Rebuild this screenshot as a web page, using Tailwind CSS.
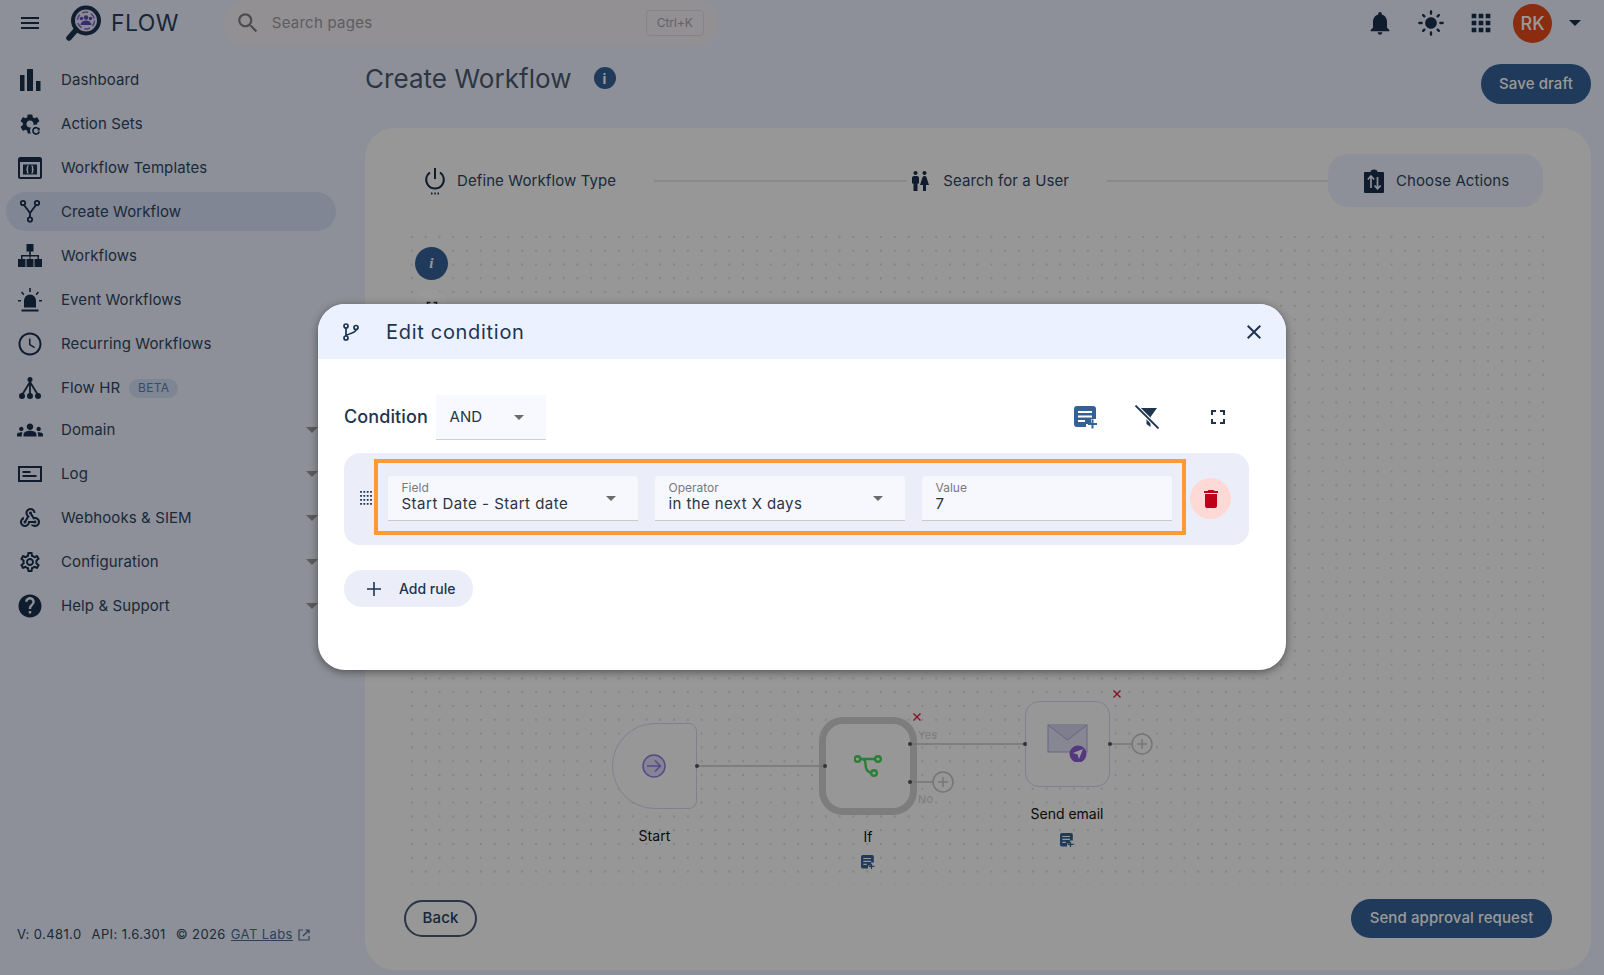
<!DOCTYPE html>
<html lang="en">
<head>
    <meta charset="UTF-8">
    <title>FLOW - Create Workflow</title>
    <script src="https://cdn.jsdelivr.net/npm/@tailwindcss/browser@4"></script>
</head>
<body class="m-0 overflow-hidden">
<div class="relative w-[1604px] h-[975px] overflow-hidden bg-[#ebf1fe] font-['Inter',sans-serif] text-[15px] tracking-[0.1px] text-[#2f4560]">

    <!-- top bar -->
    <header class="flex items-center h-[46px] pl-[18px]">
        <svg class="w-6 h-6 fill-[#182f4d]" viewBox="0 0 24 24"><path d="M3 18h18v-2H3v2zm0-5h18v-2H3v2zm0-7v2h18V6H3z"/></svg>
        <svg class="ml-[23px] w-[37px] h-[37px] mt-[1px]" viewBox="0 0 37 37">
            <circle cx="21" cy="15.5" r="13" fill="#e9e6f8" stroke="#1c3350" stroke-width="4"/>
            <path d="M11 25 L4 33" stroke="#1c3350" stroke-width="5.5" stroke-linecap="round"/>
            <circle cx="21" cy="15.5" r="8.5" fill="none" stroke="#7d6fd0" stroke-width="1.6" stroke-dasharray="6 3"/>
            <circle cx="21" cy="12.5" r="2.3" fill="#5d4bb8"/><circle cx="16.5" cy="13.5" r="1.7" fill="#5d4bb8"/><circle cx="25.5" cy="13.5" r="1.7" fill="#5d4bb8"/>
            <path d="M15.5 20a5.5 4.5 0 0 1 11 0z" fill="#5d4bb8"/>
        </svg>
        <span class="ml-[9px] text-[23px] tracking-[0.4px] text-[#2a405c]">FLOW</span>
        <div class="ml-[45px] flex items-center w-[494px] h-[46px] rounded-[23px] bg-[#f3f0f5] pl-[11px] pr-[14px]">
            <svg class="w-[26px] h-[26px] fill-[#7f7f82]" viewBox="0 0 24 24"><path d="M15.5 14h-.79l-.28-.27C15.41 12.59 16 11.11 16 9.5 16 5.91 13.09 3 9.5 3S3 5.91 3 9.5 5.91 16 9.5 16c1.61 0 3.09-.59 4.23-1.57l.27.28v.79l5 4.99L20.49 19l-4.99-5zm-6 0C7.01 14 5 11.99 5 9.5S7.01 5 9.5 5 14 7.01 14 9.5 11.99 14 9.5 14z"/></svg>
            <span class="ml-[11px] text-[#9c9ca1] tracking-[0.25px]">Search pages</span>
            <span class="ml-auto w-[58px] h-[26px] flex items-center justify-center border border-[#dedce2] rounded-[4px] text-[12px] tracking-normal text-[#a3a3a7]">Ctrl+K</span>
        </div>
        <div class="ml-auto flex items-center pr-[23px]">
            <svg class="w-[28px] h-[28px] fill-[#182f4d]" viewBox="0 0 24 24"><path d="M12 22c1.1 0 2-.9 2-2h-4c0 1.1.9 2 2 2zm6-6v-5c0-3.07-1.63-5.64-4.5-6.32V4c0-.83-.67-1.5-1.5-1.5s-1.5.67-1.5 1.5v.68C7.64 5.36 6 7.92 6 11v5l-2 2v1h16v-1l-2-2z"/></svg>
            <svg class="ml-[23px] w-[28px] h-[28px] fill-[#182f4d]" viewBox="0 0 24 24"><path d="M12 7c-2.76 0-5 2.24-5 5s2.24 5 5 5 5-2.24 5-5-2.24-5-5-5zM2 13h2c.55 0 1-.45 1-1s-.45-1-1-1H2c-.55 0-1 .45-1 1s.45 1 1 1zm18 0h2c.55 0 1-.45 1-1s-.45-1-1-1h-2c-.55 0-1 .45-1 1s.45 1 1 1zM11 2v2c0 .55.45 1 1 1s1-.45 1-1V2c0-.55-.45-1-1-1s-1 .45-1 1zm0 18v2c0 .55.45 1 1 1s1-.45 1-1v-2c0-.55-.45-1-1-1s-1 .45-1 1zM5.99 4.58c-.39-.39-1.03-.39-1.41 0-.39.39-.39 1.03 0 1.41l1.06 1.06c.39.39 1.03.39 1.41 0s.39-1.03 0-1.41L5.99 4.58zm12.37 12.37c-.39-.39-1.03-.39-1.41 0-.39.39-.39 1.03 0 1.41l1.06 1.06c.39.39 1.03.39 1.41 0 .39-.39.39-1.03 0-1.41l-1.06-1.06zm1.06-10.96c.39-.39.39-1.03 0-1.41-.39-.39-1.03-.39-1.41 0l-1.06 1.06c-.39.39-.39 1.03 0 1.41s1.03.39 1.41 0l1.06-1.06zM7.05 18.36c.39-.39.39-1.03 0-1.41-.39-.39-1.03-.39-1.41 0l-1.06 1.06c-.39.39-.39 1.03 0 1.41s1.03.39 1.41 0l1.06-1.06z"/></svg>
            <svg class="ml-[22px] w-[28px] h-[28px] fill-[#182f4d]" viewBox="0 0 24 24"><path d="M4 8h4V4H4v4zm6 12h4v-4h-4v4zm-6 0h4v-4H4v4zm0-6h4v-4H4v4zm6 0h4v-4h-4v4zm6-10v4h4V4h-4zm-6 4h4V4h-4v4zm6 6h4v-4h-4v4zm0 6h4v-4h-4v4z"/></svg>
            <div class="ml-[18px] w-[39px] h-[39px] rounded-full bg-[#e64a19] flex items-center justify-center text-white text-[18px] font-medium tracking-normal">RK</div>
            <span class="ml-[17px] w-0 h-0 border-x-[6px] border-x-transparent border-t-[6px] border-t-[#182f4d]"></span>
        </div>
    </header>

    <div class="flex h-[929px]">
        <!-- sidebar -->
        <aside class="relative w-[365px] shrink-0 pt-[12px]">
            <nav>
                <a class="flex items-center h-[44px] pl-[18px] gap-[19px]">
                    <svg class="w-6 h-6 -mt-[1px] fill-[#182f4d]" viewBox="0 0 24 24"><path d="M2 7h4.500v16H2zM9 1h6v22H9zM18 13h4.500v10H18z"/></svg>Dashboard</a>
                <a class="flex items-center h-[44px] pl-[18px] gap-[19px]">
                    <svg class="w-6 h-6 -mt-[1px]" viewBox="0 0 24 24"><path fill="#182f4d" d="M19.14 12.94c.04-.3.06-.61.06-.94 0-.32-.02-.64-.07-.94l2.03-1.58c.18-.14.23-.41.12-.61l-1.92-3.32c-.12-.22-.37-.29-.59-.22l-2.39.96c-.5-.38-1.03-.7-1.62-.94l-.36-2.54c-.04-.24-.24-.41-.48-.41h-3.84c-.24 0-.43.17-.47.41l-.36 2.54c-.59.24-1.13.57-1.62.94l-2.39-.96c-.22-.08-.47 0-.59.22L2.74 8.87c-.12.21-.08.47.12.61l2.03 1.58c-.05.3-.07.62-.07.94s.02.64.07.94l-2.03 1.58c-.18.14-.23.41-.12.61l1.92 3.32c.12.22.37.29.59.22l2.39-.96c.5.38 1.03.7 1.62.94l.36 2.54c.05.24.24.41.48.41h3.84c.24 0 .44-.17.47-.41l.36-2.54c.59-.24 1.13-.56 1.62-.94l2.39.96c.22.08.47 0 .59-.22l1.92-3.32c.12-.22.07-.47-.12-.61l-2.01-1.58zM12 15.6c-1.98 0-3.6-1.62-3.6-3.6s1.62-3.6 3.6-3.6 3.6 1.62 3.6 3.6-1.62 3.6-3.6 3.6z"/><circle cx="18" cy="18.5" r="6" fill="#ebf1fe"/><path d="M21 17.5a3.2 3.2 0 1 0 .2 2" fill="none" stroke="#182f4d" stroke-width="1.6"/><path d="M21.7 15.6v2.8h-2.8z" fill="#182f4d"/></svg>Action Sets</a>
                <a class="flex items-center h-[44px] pl-[18px] gap-[19px]">
                    <svg class="w-6 h-6 -mt-[1px]" viewBox="0 0 24 24"><rect y="1" width="24" height="22" rx="2.500" fill="#182f4d"/><rect x="2" y="6" width="20" height="15" fill="#ebf1fe"/><rect x="5" y="8.500" width="14" height="10" fill="#182f4d"/><path d="M10.500 10c-1.500 0-1 2-1 3-.2.4-.8.500-1.200.500.4 0 1 .1 1.200.5 0 1-.5 3 1 3M13.500 10c1.500 0 1 2 1 3 .2.4.8.500 1.200.500-.4 0-1 .1-1.200.5 0 1 .5 3-1 3" fill="none" stroke="#ebf1fe" stroke-width="1.400"/></svg>Workflow Templates</a>
                <a class="flex items-center h-[39px] mt-[2px] mb-[3px] ml-[6px] w-[330px] pl-[12px] gap-[19px] rounded-[20px] bg-[#d5dff7]">
                    <svg class="w-6 h-6 -mt-[1px]" viewBox="0 0 24 24" fill="none" stroke="#182f4d" stroke-width="1.8"><circle cx="5" cy="4" r="2.2"/><circle cx="19" cy="4" r="2.2"/><circle cx="12" cy="20.5" r="2.2"/><path d="M6 6l6 8 6-8M12 14v4.3"/></svg><span class="mt-[1px]">Create Workflow</span></a>
                <a class="flex items-center h-[44px] pl-[18px] gap-[19px]">
                    <svg class="w-6 h-6 -mt-[1px] fill-[#182f4d]" viewBox="0 0 24 24"><path d="M8.500 0h7v7.500h-2.700V11H21v4h3v8h-7.500v-8h3v-2.500h-7V15h3v8h-7v-8h3v-2.500h-7V15h3v8H0v-8h3v-4h8.200V7.500H8.500z"/></svg>Workflows</a>
                <a class="flex items-center h-[44px] pl-[18px] gap-[19px]">
                    <svg class="w-6 h-6 -mt-[1px] fill-[#182f4d]" viewBox="0 0 24 24"><path d="M6 19.500v-7a6 6 0 0 1 12 0v7zM3.500 21.500h17v2h-17zM11.200 0h1.600v4h-1.600zM0 12h3v1.600H0zM21 12h3v1.600h-3zM3 4.500l1.200-1 2.200 2.800-1.200 1zM21 4.500l-1.200-1-2.200 2.800 1.200 1z"/></svg>Event Workflows</a>
                <a class="flex items-center h-[44px] pl-[18px] gap-[19px]">
                    <svg class="w-6 h-6 -mt-[1px] fill-[#182f4d]" viewBox="0 0 24 24"><path d="M11.990 0.500C5.640 0.500 0.500 5.650 0.500 12s5.140 11.500 11.490 11.500C18.350 23.500 23.500 18.350 23.500 12S18.350 0.500 11.990 0.500zM12 21.500c-5.250 0-9.500-4.250-9.500-9.500S6.750 2.500 12 2.500s9.500 4.250 9.500 9.500-4.250 9.500-9.500 9.500zM12.500 6.500H11v6.500l5.250 3.150.75-1.230-4.500-2.670z"/></svg>Recurring Workflows</a>
                <a class="flex items-center h-[44px] pl-[18px] gap-[19px]">
                    <svg class="w-6 h-6 -mt-[1px]" viewBox="0 0 24 24"><path d="M12 4v15M12 6L4 19M12 6l8 13" fill="none" stroke="#182f4d" stroke-width="1.8"/><g fill="#182f4d"><circle cx="12" cy="3.500" r="2.500"/><circle cx="4" cy="20" r="3"/><circle cx="12" cy="20" r="3"/><circle cx="20" cy="20" r="3"/></g></svg>
                    <span>Flow HR</span>
                    <span class="-ml-[10px] w-[49px] h-[19px] rounded-[10px] bg-[#d3def5] flex items-center justify-center text-[12px] tracking-[0.4px] text-[#617ab4]">BETA</span></a>
                <a class="relative flex items-center h-[44px] -mt-[2px] pl-[18px] gap-[19px]">
                    <svg class="w-[26px] h-[26px] -ml-[1px] -mr-[1px] -mt-[1px] fill-[#182f4d]" viewBox="0 0 24 24"><path d="M4 13c1.100 0 2-.9 2-2s-.9-2-2-2-2 .9-2 2 .9 2 2 2zm1.130 1.100c-.37-.06-.74-.1-1.130-.1-.99 0-1.930.21-2.780.58C.48 14.900 0 15.620 0 16.430V18h4.500v-1.610c0-.83.23-1.610.63-2.290zM20 13c1.100 0 2-.9 2-2s-.9-2-2-2-2 .9-2 2 .9 2 2 2zm4 3.430c0-.81-.48-1.530-1.220-1.850-.85-.37-1.790-.58-2.780-.58-.39 0-.76.04-1.130.1.4.68.63 1.460.63 2.290V18H24v-1.570zm-7.760-2.780c-1.170-.52-2.610-.9-4.240-.9-1.630 0-3.070.39-4.240.9C6.680 14.130 6 15.210 6 16.390V18h12v-1.610c0-1.180-.68-2.260-1.760-2.740zM12 12c1.660 0 3-1.340 3-3s-1.340-3-3-3-3 1.340-3 3 1.340 3 3 3z"/></svg>Domain
                    <span class="absolute left-[306px] top-[19px] w-0 h-0 border-x-[6px] border-x-transparent border-t-[6px] border-t-[#9a9a9d]"></span></a>
                <a class="relative flex items-center h-[44px] pl-[18px] gap-[19px]">
                    <svg class="w-6 h-6 -mt-[1px]" viewBox="0 0 24 24" fill="none" stroke="#182f4d"><rect x="1" y="5" width="22" height="14" stroke-width="2"/><path d="M4.500 10h8M4.500 14h14" stroke-width="1.800"/></svg>Log
                    <span class="absolute left-[306px] top-[19px] w-0 h-0 border-x-[6px] border-x-transparent border-t-[6px] border-t-[#9a9a9d]"></span></a>
                <a class="relative flex items-center h-[44px] pl-[18px] gap-[19px]">
                    <svg class="w-6 h-6 -mt-[1px] fill-[#182f4d]" viewBox="0 0 24 24"><path d="M10 15h5.880c.27-.31.67-.5 1.120-.5.83 0 1.500.67 1.500 1.500s-.67 1.500-1.500 1.500c-.44 0-.84-.19-1.120-.5H11.900c-.46 2.280-2.480 4-4.900 4-2.760 0-5-2.240-5-5 0-2.420 1.720-4.440 4-4.900v2.070c-1.160.41-2 1.530-2 2.830 0 1.650 1.350 3 3 3s3-1.350 3-3v-1zm2.500-11c1.650 0 3 1.350 3 3h2c0-2.760-2.240-5-5-5s-5 2.240-5 5c0 1.430.6 2.710 1.550 3.620l-2.350 3.900c-.68.14-1.200.75-1.200 1.480 0 .83.67 1.500 1.500 1.500s1.500-.67 1.500-1.500c0-.16-.02-.31-.07-.45l3.380-5.630C10.490 9.610 9.500 8.420 9.500 7c0-1.650 1.350-3 3-3zm4.500 9c-.64 0-1.230.2-1.720.54l-3.050-5.070C11.530 8.350 11 7.740 11 7c0-.83.67-1.500 1.500-1.500S14 6.170 14 7c0 .15-.02.29-.06.43l2.190 3.650c.28-.05.57-.08.87-.08 2.760 0 5 2.240 5 5s-2.240 5-5 5c-1.850 0-3.470-1.010-4.330-2.500h2.670c.48.32 1.050.5 1.660.5 1.650 0 3-1.350 3-3s-1.350-3-3-3z"/></svg>Webhooks &amp; SIEM
                    <span class="absolute left-[306px] top-[19px] w-0 h-0 border-x-[6px] border-x-transparent border-t-[6px] border-t-[#9a9a9d]"></span></a>
                <a class="relative flex items-center h-[44px] pl-[18px] gap-[19px]">
                    <svg class="w-6 h-6 -mt-[1px] fill-[#182f4d]" viewBox="0 0 24 24"><path d="M19.430 12.980c.04-.32.07-.64.07-.98 0-.34-.03-.66-.07-.98l2.110-1.650c.19-.15.24-.42.12-.64l-2-3.460c-.09-.16-.26-.25-.44-.25-.06 0-.12.01-.17.03l-2.490 1c-.52-.4-1.080-.73-1.690-.98l-.38-2.650C14.460 2.180 14.250 2 14 2h-4c-.25 0-.46.18-.49.42l-.38 2.650c-.61.25-1.170.59-1.690.98l-2.490-1c-.06-.02-.12-.03-.18-.03-.17 0-.34.09-.43.25l-2 3.460c-.13.22-.07.49.12.64l2.110 1.650c-.04.32-.07.65-.07.98 0 .33.03.66.07.98l-2.110 1.650c-.19.15-.24.42-.12.64l2 3.460c.09.16.26.25.44.25.06 0 .12-.01.17-.03l2.490-1c.52.4 1.080.73 1.690.98l.38 2.650c.03.24.24.42.49.42h4c.25 0 .46-.18.49-.42l.38-2.650c.61-.25 1.170-.59 1.690-.98l2.490 1c.06.02.12.03.18.03.17 0 .34-.09.43-.25l2-3.460c.12-.22.07-.49-.12-.64l-2.110-1.650zm-1.980-1.710c.04.31.05.52.05.73 0 .21-.02.43-.05.73l-.14 1.130.89.7 1.080.84-.7 1.210-1.270-.51-1.040-.42-.9.68c-.43.32-.84.56-1.250.73l-1.060.43-.16 1.130-.2 1.350h-1.400l-.19-1.350-.16-1.130-1.060-.43c-.43-.18-.83-.41-1.230-.71l-.91-.7-1.060.43-1.270.51-.7-1.210 1.080-.84.89-.7-.14-1.130c-.03-.31-.05-.54-.05-.74s.02-.43.05-.73l.14-1.130-.89-.7-1.080-.84.7-1.210 1.270.51 1.040.42.9-.68c.43-.32.84-.56 1.250-.73l1.060-.43.16-1.130.2-1.350h1.390l.19 1.350.16 1.130 1.060.43c.43.18.83.41 1.230.71l.91.7 1.060-.43 1.270-.51.7 1.210-1.070.85-.89.7.14 1.130zM12 8c-2.210 0-4 1.790-4 4s1.790 4 4 4 4-1.790 4-4-1.790-4-4-4zm0 6c-1.100 0-2-.9-2-2s.9-2 2-2 2 .9 2 2-.9 2-2 2z"/></svg>Configuration
                    <span class="absolute left-[306px] top-[19px] w-0 h-0 border-x-[6px] border-x-transparent border-t-[6px] border-t-[#9a9a9d]"></span></a>
                <a class="relative flex items-center h-[44px] pl-[18px] gap-[19px]">
                    <svg class="w-6 h-6 -mt-[1px] fill-[#182f4d]" viewBox="0 0 24 24"><path d="M12 .5C5.650.5.5 5.650.5 12S5.650 23.500 12 23.500 23.500 18.350 23.500 12 18.350.5 12 .5zm1.200 19h-2.400v-2.400h2.400v2.400zm2.480-8.900l-1.080 1.100C13.740 12.580 13.200 13.300 13.200 15h-2.400v-.6c0-1.320.54-2.520 1.400-3.400l1.490-1.510c.44-.43.71-1.030.71-1.690 0-1.320-1.080-2.400-2.400-2.400s-2.400 1.080-2.400 2.400H7.200C7.200 5.150 9.350 3 12 3s4.800 2.150 4.800 4.800c0 1.060-.43 2.020-1.120 2.800z"/></svg>Help &amp; Support
                    <span class="absolute left-[306px] top-[19px] w-0 h-0 border-x-[6px] border-x-transparent border-t-[6px] border-t-[#9a9a9d]"></span></a>
            </nav>
            <div class="absolute left-[17px] top-[879px] flex items-center text-[13px] tracking-[0.4px] whitespace-nowrap">
                <span>V: 0.481.0</span><span class="ml-[10px]">API: 1.6.301</span><span class="ml-[10px]">© 2026</span>
                <span class="ml-[5px] underline text-[#4d6b94]">GAT Labs</span>
                <svg class="ml-[5px] w-[12px] h-[12px]" viewBox="0 0 12 12" fill="none" stroke="#4d6b94" stroke-width="1.200"><path d="M5 1H1v10h10V7M5 7l6-6M7.500 1H11v3.500"/></svg>
            </div>
        </aside>

        <!-- main column -->
        <main class="flex-1 flex flex-col pr-[13px] pb-[5px]">
            <div class="flex items-start h-[82px] shrink-0">
                <h1 class="mt-[15px] text-[26px] leading-[36px] font-normal tracking-[0.05px] text-[#4b5a6e]">Create Workflow</h1>
                <span class="ml-[22px] mt-[21px] w-[22px] h-[22px] rounded-full bg-[#346196] flex items-center justify-center text-white text-[14px] font-bold tracking-normal">i</span>
                <button class="ml-auto mt-[18px] h-[40px] w-[110px] rounded-[20px] bg-[#346196] text-white font-medium">Save draft</button>
            </div>

            <section class="flex-1 flex flex-col rounded-[30px] bg-[#fcfcfc] pt-[26px]">
                <!-- stepper -->
                <div class="flex items-center h-[53px] pl-[58px]">
                    <svg class="w-6 h-[30px] shrink-0" viewBox="0 0 24 30" fill="none" stroke="#182f4d" stroke-width="2"><path d="M7 6.500a8.800 8.800 0 1 0 10 0M12 2v11"/><path d="M8 27.500h1.500M11.300 27.500h1.500M14.500 27.500h1.500" stroke-width="1.800"/></svg>
                    <span class="ml-[10px] mt-[1px] whitespace-nowrap">Define Workflow Type</span>
                    <span class="ml-[38px] w-[253px] h-[2px] bg-[#e6e6e6]"></span>
                    <svg class="ml-[1px] w-6 h-6 shrink-0 fill-[#182f4d]" viewBox="0 0 24 24"><path d="M5.500 22v-7.500H4V9c0-1.100.9-2 2-2h3c1.100 0 2 .9 2 2v5.500H9.500V22h-4zM18 22v-6h3l-2.540-7.630C18.180 7.550 17.420 7 16.560 7h-.12c-.86 0-1.630.55-1.900 1.370L12 16h3v6h3zM7.500 6c1.110 0 2-.89 2-2s-.89-2-2-2-2 .89-2 2 .89 2 2 2zm9 0c1.110 0 2-.89 2-2s-.89-2-2-2-2 .89-2 2 .89 2 2 2z"/></svg>
                    <span class="ml-[11px] mt-[1px] whitespace-nowrap">Search for a User</span>
                    <span class="ml-[38px] w-[221px] h-[2px] bg-[#e6e6e6]"></span>
                    <div class="flex items-center w-[215px] h-[53px] pl-[34px] rounded-[20px] bg-[#ebf1fe]">
                        <svg class="w-6 h-6 shrink-0" viewBox="0 0 24 24"><path fill="#182f4d" d="M3 3h5.500a3.500 2.500 0 0 1 7 0H21a1 1 0 0 1 1 1v19a1 1 0 0 1-1 1H3a1 1 0 0 1-1-1V4a1 1 0 0 1 1-1z"/><path d="M9 19V7.500M5.800 10.500L9 7l3.200 3.500M15.500 8v11.500M12.500 16.500l3 3.300 3.200-3.300" fill="none" stroke="#ebf1fe" stroke-width="1.700"/></svg>
                        <span class="ml-[10px] mt-[1px] whitespace-nowrap">Choose Actions</span>
                    </div>
                </div>

                <!-- canvas -->
                <div class="relative mt-[23px] ml-[40px] w-[1147px] h-[655px] bg-[radial-gradient(circle,#dcdde0_0.8px,transparent_1px)] bg-[size:13.8px_13.8px]">
                    <button class="absolute left-[10px] top-[17px] w-[33px] h-[33px] rounded-full bg-[#346196] flex items-center justify-center font-['Liberation_Serif',serif] italic font-bold text-white text-[15px]">i</button>
                    <button class="absolute left-[10px] top-[60px] w-[33px] h-[33px] rounded-full bg-white flex items-center justify-center">
                        <svg class="w-[18px] h-[18px] fill-[#182f4d]" viewBox="0 0 24 24"><path d="M7 14H5v5h5v-2H7v-3zm-2-4h2V7h3V5H5v5zm12 7h-3v2h5v-5h-2v3zM14 5v2h3v3h2V5h-5z"/></svg>
                    </button>

                    <!-- Start -->
                    <div class="absolute left-[207px] top-[493px] w-[85px] h-[86px] rounded-l-[43px] rounded-r-[8px] border border-[#d4d8ee] bg-[#fcfcfc] flex items-center justify-center">
                        <svg class="w-6 h-6 -mt-[1px] -ml-[1px]" viewBox="0 0 24 24" fill="none" stroke="#8a7ce0" stroke-width="1.500"><circle cx="12" cy="12" r="11" fill="#dedaf8"/><path d="M5 12h13M13 6.500l5.500 5.500-5.500 5.500"/></svg>
                    </div>
                    <div class="absolute left-[207px] top-[595px] w-[85px] text-center text-[14px] text-[#111]">Start</div>

                    <!-- If -->
                    <div class="absolute left-[414px] top-[487px] w-[98px] h-[98px] rounded-[24px] border-[7px] border-[#d0d0d0] bg-[#fcfcfc] flex items-center justify-center">
                        <svg class="w-[28px] h-[22px]" viewBox="0 0 28 22" fill="none" stroke="#46d45c" stroke-width="2.400"><circle cx="3.500" cy="4" r="2.800"/><circle cx="24" cy="4" r="2.800"/><circle cx="20" cy="18" r="2.800"/><path d="M6.500 4h14.500M8 4c3 0 3.500 2 3.500 5s1 8 6 9"/></svg>
                    </div>
                    <div class="absolute left-[414px] top-[596px] w-[98px] text-center text-[14px] text-[#111]">If</div>
                    <svg class="absolute left-[456px] top-[625px] w-[14px] h-[14px]" viewBox="0 0 24 24"><path fill="#346196" d="M3 0h16a3 3 0 0 1 3 3v10h-5v5h-5v5H3a3 3 0 0 1-3-3V3a3 3 0 0 1 3-3z"/><path d="M4 6h13M4 11h13M4 16h6" fill="none" stroke="#fcfcfc" stroke-width="2"/><path d="M18 15v9M13.500 19.500h9.500" fill="none" stroke="#346196" stroke-width="2"/></svg>

                    <!-- Send email -->
                    <div class="absolute left-[620px] top-[471px] w-[85px] h-[86px] rounded-[14px] border border-[#d4d8ee] bg-[#fcfcfc]">
                        <svg class="absolute left-[21px] top-[22px] w-[42px] h-[38px]" viewBox="0 0 42 38"><rect x="1" y="1" width="39" height="27" fill="#e2e2f6" stroke="#a9a9d8"/><path d="M1 1l19.500 15L40 1" fill="#d2d2ee" stroke="#a9a9d8"/><circle cx="31" cy="30" r="8.500" fill="#8a5ed6"/><path d="M26 29l10-4-4 10-1.500-4.500z" fill="#fff"/></svg>
                    </div>
                    <div class="absolute left-[602px] top-[573px] w-[120px] text-center text-[14px] text-[#111] tracking-normal">Send email</div>
                    <svg class="absolute left-[655px] top-[603px] w-[14px] h-[14px]" viewBox="0 0 24 24"><path fill="#346196" d="M3 0h16a3 3 0 0 1 3 3v10h-5v5h-5v5H3a3 3 0 0 1-3-3V3a3 3 0 0 1 3-3z"/><path d="M4 6h13M4 11h13M4 16h6" fill="none" stroke="#fcfcfc" stroke-width="2"/><path d="M18 15v9M13.500 19.500h9.500" fill="none" stroke="#346196" stroke-width="2"/></svg>

                    <!-- connectors, coordinates are page pixels -->
                    <svg class="absolute inset-0 w-full h-full" viewBox="405 230 1147 655" fill="none">
                        <g stroke="#c4c4c4" stroke-width="1.500">
                            <path d="M697 766H825M910 744H1025M910 782H933M1110 744H1132"/>
                            <circle cx="943" cy="782" r="10" fill="#fcfcfc"/>
                            <circle cx="1142" cy="744" r="10" fill="#fcfcfc"/>
                            <path d="M943 777v10M938 782h10M1142 739v10M1137 744h10"/>
                        </g>
                        <g fill="#555">
                            <circle cx="697" cy="766" r="2"/><circle cx="825" cy="766" r="2"/>
                            <circle cx="910" cy="744" r="2"/><circle cx="910" cy="782" r="2"/>
                            <circle cx="1025" cy="744" r="2"/><circle cx="1110" cy="744" r="2"/>
                        </g>
                        <path d="M913.500 713.500l7 7m0-7l-7 7M1113.500 690.500l7 7m0-7l-7 7" stroke="#e61a35" stroke-width="1.400"/>
                        <text x="918" y="739" font-size="11" fill="#d0d0d0">Yes</text>
                        <text x="918" y="803" font-size="11" fill="#d0d0d0">No</text>
                    </svg>
                </div>

                <div class="flex items-center justify-between h-[39px] mt-[14px] pl-[39px] pr-[39px]">
                    <button class="w-[73px] h-[37px] rounded-[19px] border-2 border-[#465a75] font-medium text-[#2a405c]">Back</button>
                    <button class="w-[201px] h-[39px] rounded-[20px] bg-[#346196] text-white font-medium">Send approval request</button>
                </div>
            </section>
        </main>
    </div>

    <!-- backdrop -->
    <div class="absolute inset-0 bg-black/40"></div>

    <!-- dialog -->
    <div class="absolute left-[318px] top-[304px] w-[968px] h-[366px] rounded-[27px] bg-white overflow-hidden shadow-[0_2px_8px_rgba(0,0,0,0.45)] text-[#1e3550]">
        <div class="flex items-center h-[55px] pl-[24px] pr-[20px] bg-[#ebf1fe]">
            <svg class="w-[18px] h-[18px]" viewBox="0 0 18 18" fill="none" stroke="#1e3550" stroke-width="1.700"><circle cx="4" cy="3" r="2"/><circle cx="4" cy="15" r="2"/><circle cx="14" cy="4.500" r="2"/><path d="M4 5v8M14 6.500c0 3.500-4.500 3-10 6"/></svg>
            <h2 class="ml-[26px] text-[20px] font-normal tracking-[0.7px]">Edit condition</h2>
            <svg class="ml-auto w-6 h-6 fill-[#1e3550]" viewBox="0 0 24 24"><path d="M19 6.410L17.590 5 12 10.590 6.410 5 5 6.410 10.590 12 5 17.590 6.410 19 12 13.410 17.590 19 19 17.590 13.410 12z"/></svg>
        </div>
        <div class="pt-[36px] pl-[26px] pr-[37px]">
            <div class="flex items-center h-[45px]">
                <span class="-mt-[2px] w-[92px] text-[18px] font-medium">Condition</span>
                <div class="flex items-center w-[110px] h-[45px] pl-[13.5px] bg-[#f7f9fe] border-b border-[#cfd0d4] text-[#2b3442]">
                    AND
                    <span class="ml-[32px] w-0 h-0 border-x-[5.500px] border-x-transparent border-t-[5.500px] border-t-[#6b6b6b]"></span>
                </div>
                <div class="ml-auto -mt-[2px] flex items-center gap-[21px] pr-[11px]">
                    <button class="w-[40px] h-[40px] flex items-center justify-center">
                        <svg class="w-[24px] h-[24px]" viewBox="0 0 24 24"><path fill="#346196" d="M3 1h16a3 3 0 0 1 3 3v10h-5v5h-5v3H3a3 3 0 0 1-3-3V4a3 3 0 0 1 3-3z"/><path d="M4 7h14M4 11.500h14M4 16h7" fill="none" stroke="#fff" stroke-width="1.800"/><path d="M18.500 14.500v9M14 19h9" fill="none" stroke="#346196" stroke-width="2"/></svg>
                    </button>
                    <button class="w-[40px] h-[40px] flex items-center justify-center">
                        <svg class="w-[26px] h-[24px]" viewBox="0 0 26 24"><path fill="#1e3550" d="M6 3h17l-6.500 9v10l-4-3v-7z"/><path d="M2 1l22 22" stroke="#fff" stroke-width="4"/><path d="M1.500 0.500l23 23" stroke="#1e3550" stroke-width="1.800"/></svg>
                    </button>
                    <button class="ml-[10px] w-[40px] h-[40px] flex items-center justify-center">
                        <svg class="w-[24px] h-[24px] fill-[#1e3550]" viewBox="0 0 24 24"><path d="M7 14H5v5h5v-2H7v-3zm-2-4h2V7h3V5H5v5zm12 7h-3v2h5v-5h-2v3zM14 5v2h3v3h2V5h-5z"/></svg>
                    </button>
                </div>
            </div>

            <!-- rule -->
            <div class="relative flex items-center w-[905px] h-[92px] mt-[13px] pl-[16px] rounded-[16px] bg-[#ebeef9]">
                <svg class="w-[12px] h-[16px] shrink-0" viewBox="0 0 12 16" fill="none" stroke="#1e3550" stroke-width="1.800" stroke-dasharray="1.800 2.200"><path d="M1 0V16M4.300 0V16M7.700 0V16M11 0V16"/></svg>
                <div class="relative ml-[16px] -mt-[1px] w-[250px] h-[45px] pl-[13.5px] pt-[5.5px] rounded-t-[4px] bg-[#f7f8fe] border-b border-[#c9cace] leading-none">
                    <div class="text-[12px] tracking-normal text-[#77797e]">Field</div>
                    <div class="mt-[2px] text-[15px] tracking-[0.5px] text-[#2b3442]">Start Date - Start date</div>
                    <span class="absolute left-[218px] top-[20px] w-0 h-0 border-x-[5.500px] border-x-transparent border-t-[5.500px] border-t-[#6b6b6b]"></span>
                </div>
                <div class="relative ml-[17px] -mt-[1px] w-[250px] h-[45px] pl-[13.5px] pt-[5.5px] rounded-t-[4px] bg-[#f7f8fe] border-b border-[#c9cace] leading-none">
                    <div class="text-[12px] tracking-normal text-[#77797e]">Operator</div>
                    <div class="mt-[2px] text-[15px] tracking-[0.4px] text-[#2b3442]">in the next X days</div>
                    <span class="absolute left-[218px] top-[20px] w-0 h-0 border-x-[5.500px] border-x-transparent border-t-[5.500px] border-t-[#6b6b6b]"></span>
                </div>
                <div class="ml-[17px] -mt-[1px] w-[250px] h-[45px] pl-[13.5px] pt-[5.5px] rounded-t-[4px] bg-[#f7f8fe] border-b border-[#c9cace] leading-none">
                    <div class="text-[12px] tracking-normal text-[#77797e]">Value</div>
                    <div class="mt-[2px] text-[15px] text-[#2b3442]">7</div>
                </div>
                <button class="ml-[18px] -mt-[1px] w-[41px] h-[41px] rounded-full bg-[#ffd9d6] flex items-center justify-center">
                    <svg class="w-6 h-6 fill-[#c00018]" viewBox="0 0 24 24"><path d="M6 19c0 1.100.9 2 2 2h8c1.100 0 2-.9 2-2V7H6v12zM19 4h-3.500l-1-1h-5l-1 1H5v2h14V4z"/></svg>
                </button>
                <div class="absolute left-[30px] top-[6px] w-[812px] h-[76px] border-[4px] border-[#ff9933] pointer-events-none"></div>
            </div>

            <button class="flex items-center w-[129px] h-[37px] mt-[25px] pl-[20px] rounded-[18px] bg-[#ebeef9] text-[14px] font-medium tracking-normal">
                <svg class="w-[20px] h-[20px] fill-[#1e3550]" viewBox="0 0 20 20"><path d="M9.200 3h1.600v6.200H17v1.600h-6.200V17H9.200v-6.200H3V9.200h6.200z"/></svg>
                <span class="ml-[15px] -mt-[1px]">Add rule</span>
            </button>
        </div>
    </div>
</div>
</body>
</html>
